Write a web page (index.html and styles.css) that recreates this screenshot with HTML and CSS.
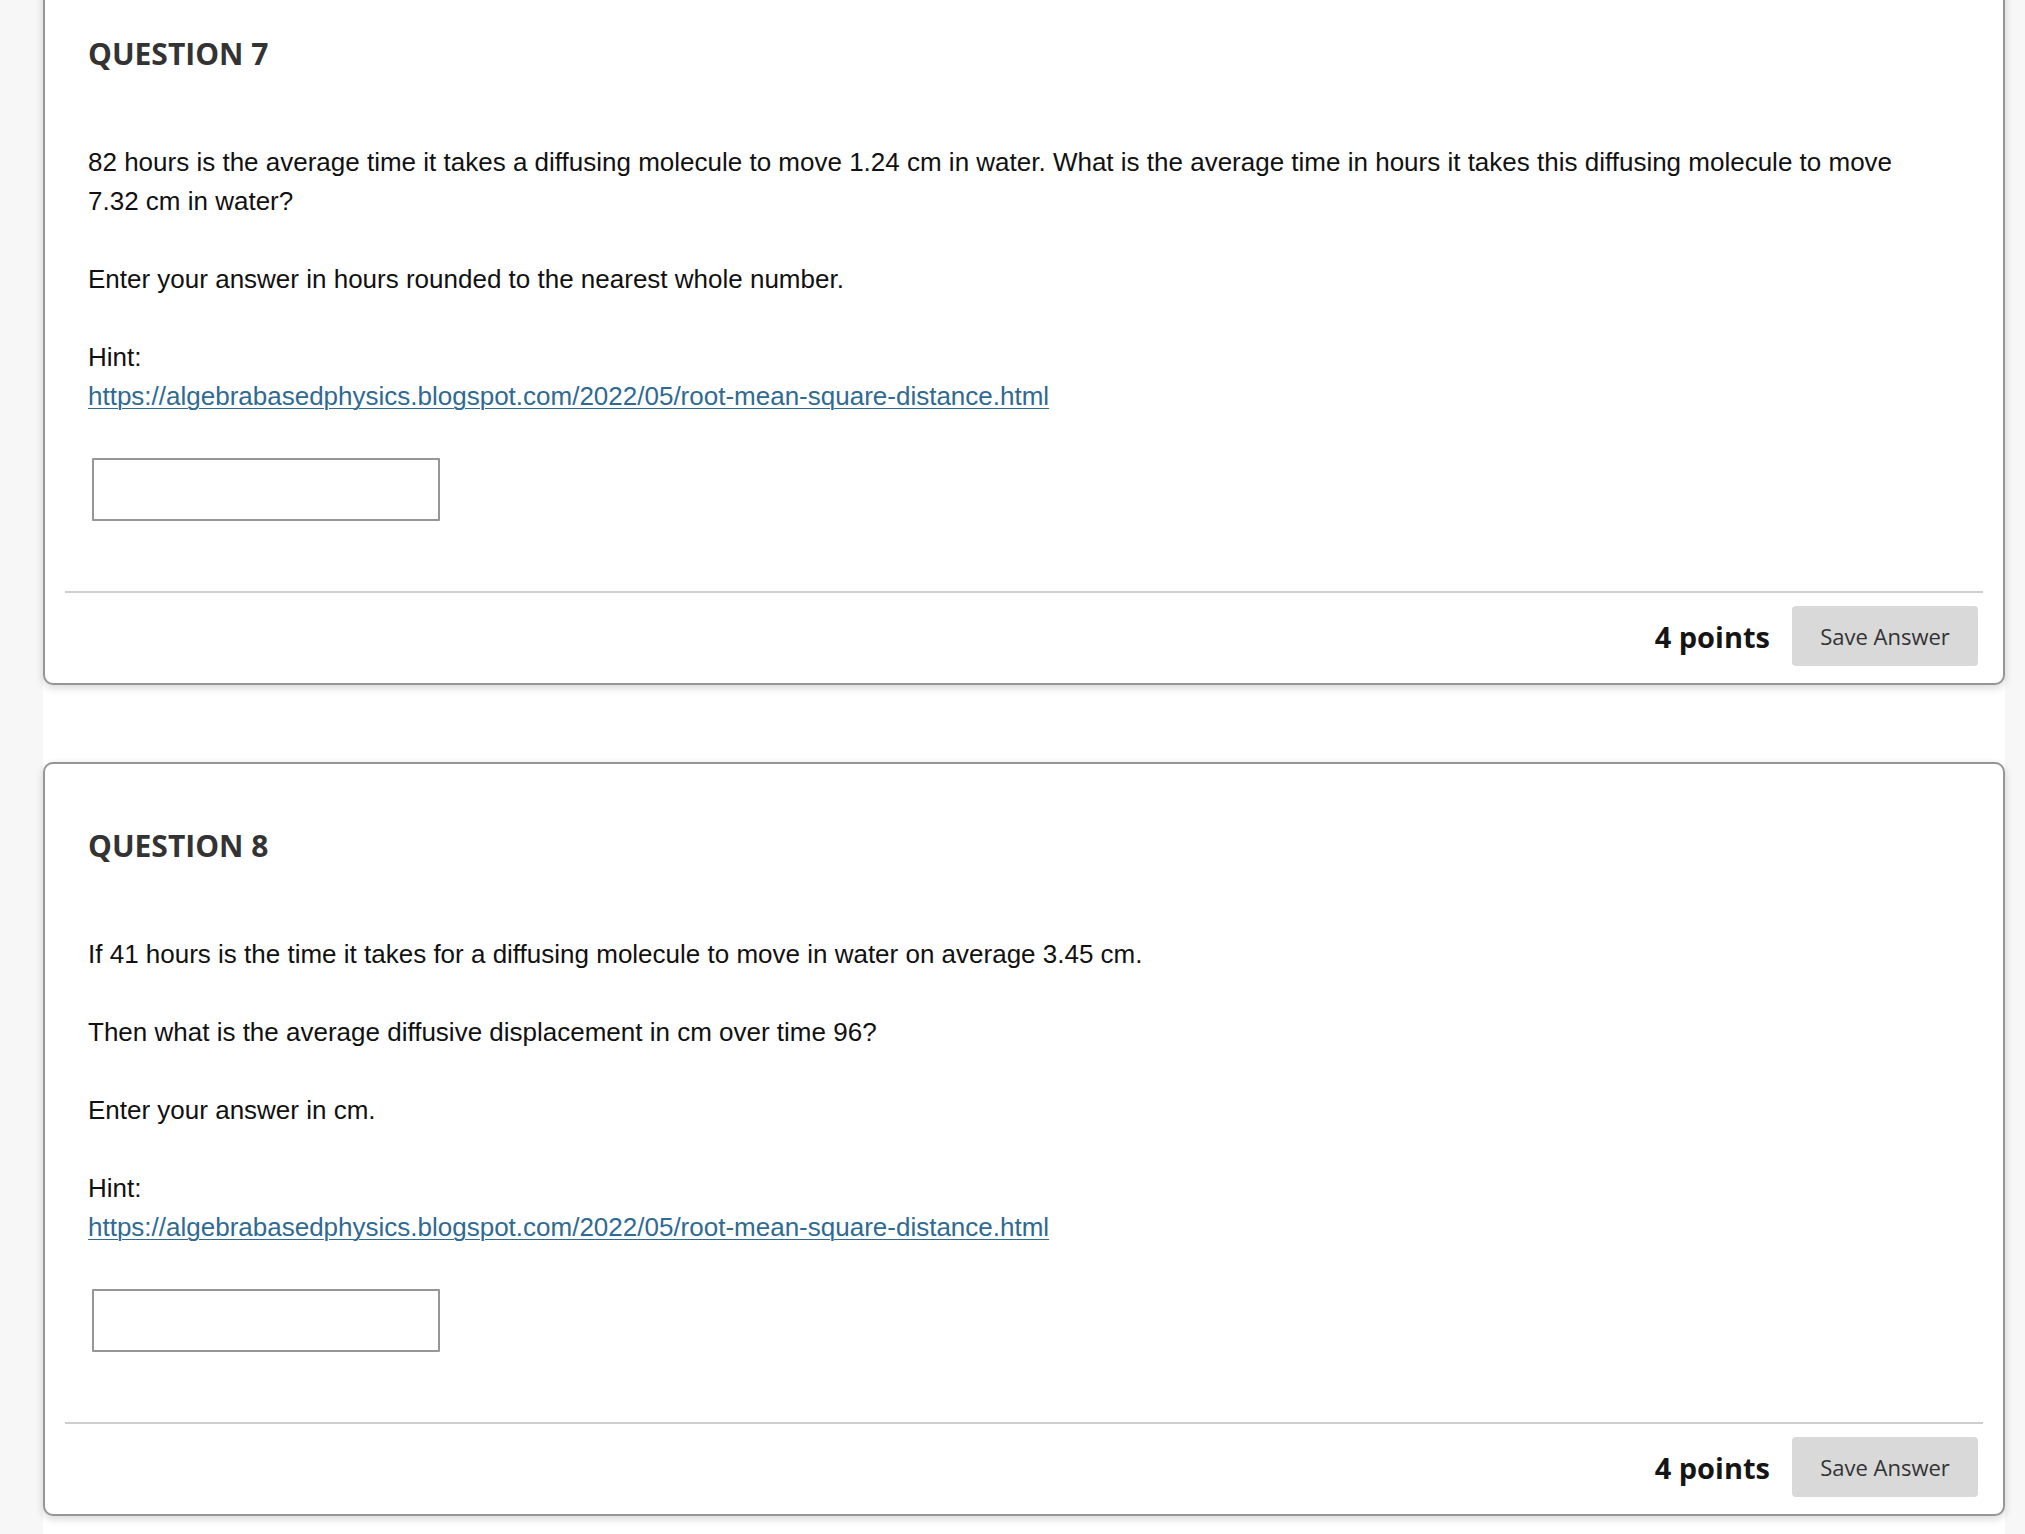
FILE: index.html
```html
<!DOCTYPE html>
<html lang="en">
<head>
<meta charset="utf-8">
<title>Questions</title>
<link rel="stylesheet" href="styles.css">
</head>
<body>
<div class="page">
  <section class="card">
    <div class="card-body">
      <h3 class="q-title">QUESTION 7</h3>
      <p>82 hours is the average time it takes a diffusing molecule to move 1.24 cm in water. What is the average time in hours it takes this diffusing molecule to move 7.32 cm in water?</p>
      <p>Enter your answer in hours rounded to the nearest whole number.</p>
      <p>Hint:<br><a href="#">https://algebrabasedphysics.blogspot.com/2022/05/root-mean-square-distance.html</a></p>
      <div class="answer"><input type="text" class="answer-input"></div>
    </div>
    <div class="card-footer">
      <span class="points">4 points</span>
      <button class="save-btn" type="button">Save Answer</button>
    </div>
  </section>

  <section class="card">
    <div class="card-body">
      <h3 class="q-title">QUESTION 8</h3>
      <p>If 41 hours is the time it takes for a diffusing molecule to move in water on average 3.45 cm.</p>
      <p>Then what is the average diffusive displacement in cm over time 96?</p>
      <p>Enter your answer in cm.</p>
      <p>Hint:<br><a href="#">https://algebrabasedphysics.blogspot.com/2022/05/root-mean-square-distance.html</a></p>
      <div class="answer"><input type="text" class="answer-input"></div>
    </div>
    <div class="card-footer">
      <span class="points">4 points</span>
      <button class="save-btn" type="button">Save Answer</button>
    </div>
  </section>
</div>
</body>
</html>
```

FILE: styles.css
```css
html, body {
  margin: 0;
  padding: 0;
}

body {
  background: #f7f7f7;
  font-family: "Liberation Sans", Arial, sans-serif;
  color: #111;
}

.page {
  margin: -30px 0 0 43px;
  width: 1962px;
  background: #fff;
  padding-bottom: 60px;
  display: flex;
  flex-direction: column;
  gap: 77px;
}

.card {
  background: #fff;
  border: 2px solid #969696;
  border-radius: 10px;
  box-shadow: 0 3px 8px rgba(0, 0, 0, 0.16);
  padding: 0 20px;
}

.card-body {
  padding: 61px 45px 0 23px;
}

.q-title {
  margin: 0 0 68px;
  font-family: "Open Sans", sans-serif;
  font-weight: 700;
  font-size: 30px;
  line-height: 42px;
  color: #333;
}

.card-body p {
  margin: 0 0 39px;
  font-size: 26px;
  line-height: 39px;
}

.card-body a {
  color: #2f6a92;
  text-decoration: underline;
  text-decoration-thickness: 1px;
  text-underline-offset: 3px;
}

.answer {
  margin: 0 -45px 0 -23px;
  padding: 3px 0 70px 27px;
  border-bottom: 2px solid #cfcfcf;
}

.answer-input {
  display: block;
  box-sizing: border-box;
  width: 348px;
  height: 63px;
  margin: 0;
  border: 2px solid #969696;
  border-radius: 1px;
  background: #fff;
}

.card-footer {
  display: flex;
  justify-content: flex-end;
  align-items: center;
  gap: 22px;
  padding: 13px 5px 17px 0;
}

.points {
  font-family: "Open Sans", sans-serif;
  font-weight: 700;
  font-size: 29px;
  color: #151515;
}

.save-btn {
  width: 186px;
  height: 60px;
  border: none;
  border-radius: 4px;
  background: #d9d9d9;
  color: #333;
  font-family: "Open Sans", sans-serif;
  font-size: 22px;
  padding: 0;
}
```
